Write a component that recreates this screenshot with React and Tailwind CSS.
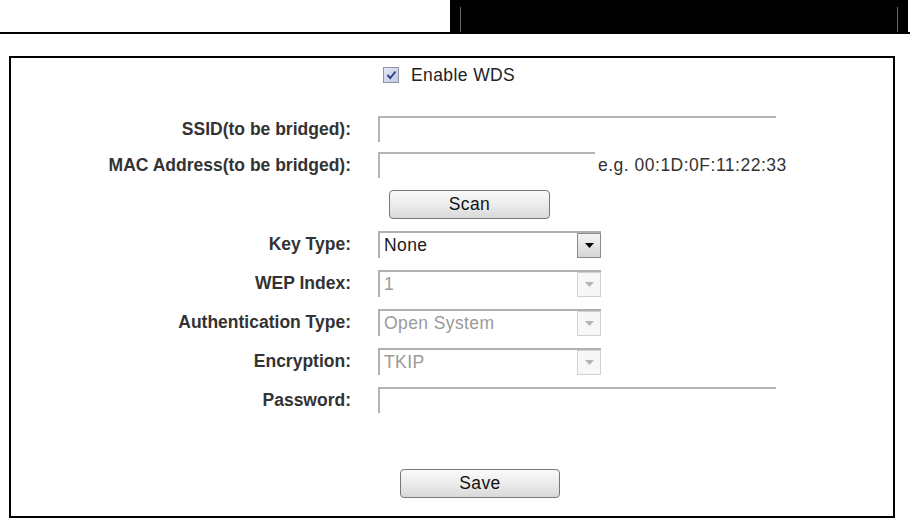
import React from "react";

// label column + control column, same for every row of the form
function Row({ label, className = "", children }) {
  return (
    <div className={`flex items-center ${className}`}>
      <div className="w-[340px] shrink-0 text-right text-[17.5px] font-bold text-[#333]">
        {label}
      </div>
      <div className="ml-[27px] flex items-center">{children}</div>
    </div>
  );
}

function TextBox({ width }) {
  return <div className={`h-[26px] ${width} border-t-2 border-l-2 border-[#b4b4b4] bg-white`} />;
}

function Select({ value, disabled }) {
  return (
    <div className="flex h-[27px] w-[223px] border-t-2 border-l-2 border-[#b0b0b0] bg-white">
      <div
        className={`flex-1 pl-[4px] text-[17.5px] leading-[25px] tracking-[0.4px] ${
          disabled ? "text-[#9a9a9a]" : "text-[#1a1a1a]"
        }`}
      >
        {value}
      </div>
      <div
        className={`flex w-[24px] items-center justify-center border ${
          disabled ? "border-[#d2d2d2] bg-[#f7f7f7]" : "border-[#8a8a8a] bg-gradient-to-b from-[#f4f4f4] to-[#d6d6d6]"
        }`}
      >
        <svg width="9" height="5" viewBox="0 0 9 5">
          <path d="M0 0 L9 0 L4.5 5 Z" fill={disabled ? "#b5b5b5" : "#000"} />
        </svg>
      </div>
    </div>
  );
}

function Button({ label, width }) {
  return (
    <div
      className={`flex h-[29px] ${width} items-center justify-center rounded-[4px] border border-[#777] bg-gradient-to-b from-[#fafafa] via-[#ececec] to-[#d9d9d9] text-[17.5px] tracking-[0.4px] text-[#111]`}
    >
      {label}
    </div>
  );
}

export default function App() {
  return (
    <div className="h-[529px] w-[910px] bg-white font-['Liberation_Sans',Arial,sans-serif]">
      {/* header strip */}
      <div className="flex h-[32px]">
        <div className="w-[450px]" />
        <div className="w-[458px] bg-black px-[10px] pt-[7px]">
          <div className="h-full border-x border-[#666]" />
        </div>
      </div>
      <div className="h-[2px] w-full bg-black" />

      {/* form box */}
      <div className="ml-[9px] mt-[22px] h-[462px] w-[886px] border-2 border-black">
        <div className="flex flex-col">
          <div className="ml-[372px] mt-[4px] flex h-[26px] items-center">
            <div className="flex h-[16px] w-[16px] items-center justify-center border border-[#8d93aa] bg-gradient-to-br from-[#e4e8f4] to-[#c2c9dc]">
              <svg width="11" height="10" viewBox="0 0 11 10">
                <path d="M1.5 5 L4.3 8 L9.5 1.5" stroke="#2f3f95" strokeWidth="2" fill="none" />
              </svg>
            </div>
            <span className="ml-[12px] text-[17.5px] tracking-[0.4px] text-[#222]">Enable WDS</span>
          </div>

          <Row label="SSID(to be bridged):" className="mt-[28px] h-[26px]">
            <TextBox width="w-[398px]" />
          </Row>
          <Row label="MAC Address(to be bridged):" className="mt-[10px] h-[26px]">
            <TextBox width="w-[217px]" />
            <span className="ml-[3px] text-[17.5px] tracking-[0.5px] text-[#333]">e.g. 00:1D:0F:11:22:33</span>
          </Row>
          <div className="ml-[378px] mt-[12px]">
            <Button label="Scan" width="w-[161px]" />
          </div>

          <Row label="Key Type:" className="mt-[12px] h-[27px]">
            <Select value="None" />
          </Row>
          <Row label="WEP Index:" className="mt-[12px] h-[27px]">
            <Select value="1" disabled />
          </Row>
          <Row label="Authentication Type:" className="mt-[12px] h-[27px]">
            <Select value="Open System" disabled />
          </Row>
          <Row label="Encryption:" className="mt-[12px] h-[27px]">
            <Select value="TKIP" disabled />
          </Row>
          <Row label="Password:" className="mt-[12px] h-[26px]">
            <TextBox width="w-[398px]" />
          </Row>

          <div className="ml-[389px] mt-[56px]">
            <Button label="Save" width="w-[160px]" />
          </div>
        </div>
      </div>
    </div>
  );
}
